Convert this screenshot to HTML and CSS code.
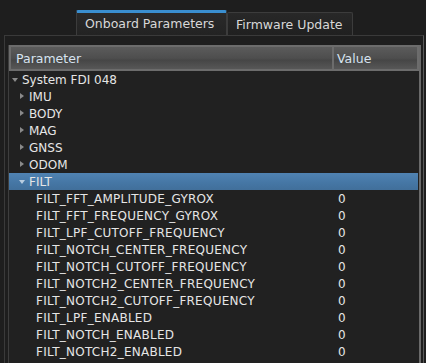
FILE: index.html
```html
<!DOCTYPE html>
<html>
<head>
<meta charset="utf-8">
<link rel="stylesheet" href="styles.css">
</head>
<body>
<div class="tabs">
  <div class="tab active">Onboard Parameters</div>
  <div class="tab">Firmware Update</div>
</div>
<div class="panel">
  <div class="tree">
    <div class="header">
      <div class="hcell name">Parameter</div>
      <div class="hcell value">Value</div>
    </div>
    <div class="rows">
      <div class="row lvl0"><span class="arrow down"></span><span class="name">System FDI 048</span></div>
      <div class="row lvl1"><span class="arrow right"></span><span class="name">IMU</span></div>
      <div class="row lvl1"><span class="arrow right"></span><span class="name">BODY</span></div>
      <div class="row lvl1"><span class="arrow right"></span><span class="name">MAG</span></div>
      <div class="row lvl1"><span class="arrow right"></span><span class="name">GNSS</span></div>
      <div class="row lvl1"><span class="arrow right"></span><span class="name">ODOM</span></div>
      <div class="row lvl1 selected"><span class="arrow down light"></span><span class="name">FILT</span></div>
      <div class="row lvl2"><span class="name">FILT_FFT_AMPLITUDE_GYROX</span><span class="val">0</span></div>
      <div class="row lvl2"><span class="name">FILT_FFT_FREQUENCY_GYROX</span><span class="val">0</span></div>
      <div class="row lvl2"><span class="name">FILT_LPF_CUTOFF_FREQUENCY</span><span class="val">0</span></div>
      <div class="row lvl2"><span class="name">FILT_NOTCH_CENTER_FREQUENCY</span><span class="val">0</span></div>
      <div class="row lvl2"><span class="name">FILT_NOTCH_CUTOFF_FREQUENCY</span><span class="val">0</span></div>
      <div class="row lvl2"><span class="name">FILT_NOTCH2_CENTER_FREQUENCY</span><span class="val">0</span></div>
      <div class="row lvl2"><span class="name">FILT_NOTCH2_CUTOFF_FREQUENCY</span><span class="val">0</span></div>
      <div class="row lvl2"><span class="name">FILT_LPF_ENABLED</span><span class="val">0</span></div>
      <div class="row lvl2"><span class="name">FILT_NOTCH_ENABLED</span><span class="val">0</span></div>
      <div class="row lvl2"><span class="name">FILT_NOTCH2_ENABLED</span><span class="val">0</span></div>
    </div>
  </div>
</div>
</body>
</html>
```
FILE: styles.css
```css
html, body {
  margin: 0;
  padding: 0;
  background: #1e1e1e;
  width: 426px;
  height: 363px;
  overflow: hidden;
  font-family: "DejaVu Sans", sans-serif;
  font-size: 12px;
  color: #e6e6e6;
}
.tabs {
  display: flex;
  align-items: flex-end;
  height: 35px;
  padding-left: 76px;
  box-sizing: border-box;
}
.tab {
  box-sizing: border-box;
  height: 23px;
  width: 126px;
  border: 1px solid #3c3c3c;
  border-bottom: none;
  border-radius: 2px 2px 0 0;
  background: linear-gradient(#282828, #202020);
  color: #d8d8d8;
  font-size: 12.5px;
  padding: 4px 0 0 8px;
  white-space: nowrap;
}
.tab.active {
  width: 151px;
  height: 25px;
  border-top: 3px solid #3a8fd0;
  padding: 3px 0 0 8px;
  background: linear-gradient(#2a2a2a, #232323);
}
.panel {
  margin-left: 4px;
  width: 420px;
  height: 330px;
  box-sizing: border-box;
  border: 1px solid #3a3a3a;
  border-right: 1px solid #5a5a5a;
  padding: 9px 2px 0 3px;
}
.tree {
  box-sizing: border-box;
  height: 100%;
  border-left: 1px solid #3e3e3e;
  border-right: 2px solid #6a6a6a;
  background: #212121;
}
.header {
  display: flex;
  height: 26px;
  box-sizing: border-box;
  border: 2px solid #6c6c6c;
  background: linear-gradient(#5b5b5b, #4e4e4e 50%, #464646 60%, #575757);
  color: #d7e3ef;
  font-size: 12.5px;
}
.hcell {
  display: flex;
  align-items: center;
  box-sizing: border-box;
}
.hcell.name {
  width: 323px;
  padding-left: 5px;
  border-right: 2px solid #6c6c6c;
}
.hcell.value {
  flex: 1;
  padding-left: 3px;
}
.rows {
  display: flex;
  flex-direction: column;
}
.row {
  height: 17px;
  display: flex;
  align-items: center;
  white-space: nowrap;
  position: relative;
}
.row .name {
  flex: none;
}
.row.lvl0 { padding-left: 2px; }
.row.lvl1 { padding-left: 9px; }
.row.lvl2 { padding-left: 27px; }
.row.lvl2 .name { letter-spacing: 0.25px; }
.row .val {
  position: absolute;
  left: 329px;
}
.row.selected {
  background: linear-gradient(#5083b3, #4576a4 60%, #416f9a);
  margin-right: 1px;
}
.arrow {
  width: 11px;
  height: 17px;
  display: inline-block;
  position: relative;
  flex: none;
}
.arrow.down::before {
  content: "";
  position: absolute;
  left: 1px;
  top: 7px;
  border-left: 3px solid transparent;
  border-right: 3px solid transparent;
  border-top: 4px solid #8a8a8a;
}
.arrow.down.light::before {
  border-top-color: #b9cde0;
}
.arrow.right::before {
  content: "";
  position: absolute;
  left: 2px;
  top: 5px;
  border-top: 3px solid transparent;
  border-bottom: 3px solid transparent;
  border-left: 4px solid #8a8a8a;
}
```
